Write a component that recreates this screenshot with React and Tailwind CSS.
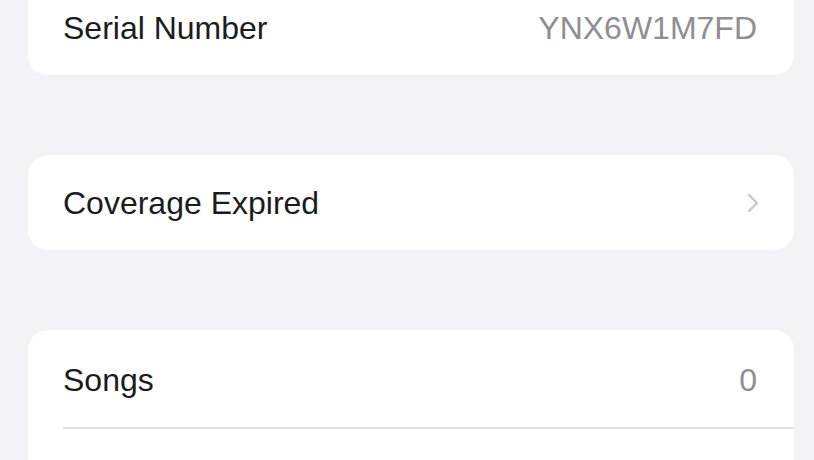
import { ChevronRight } from 'lucide-react';

function Row({ label, value, chevron, divider, h = 'h-[95px]' }) {
  return (
    <div className={`relative flex items-center justify-between ${h} pl-[35px] pr-[37px]`}>
      <span className="text-[32px] text-[#1c1c1e]">{label}</span>
      {value && <span className="text-[32px] text-[#8e8e93]">{value}</span>}
      {chevron && <ChevronRight size={32} strokeWidth={1.8} color="#c7c7cc" className="-mr-[12px]" />}
      {divider && <div className="absolute left-[35px] right-0 bottom-0 h-[2px] bg-[#e3e3e6]" />}
    </div>
  );
}

export default function App() {
  return (
    <div className="w-[814px] h-[460px] overflow-hidden bg-[#f2f2f7] font-['Liberation_Sans',sans-serif]">
      <div className="flex flex-col gap-[80px] pl-[28px] pr-[20px] mt-[-20px]">
        <div className="bg-white rounded-[20px]">
          <Row label="Serial Number" value="YNX6W1M7FD" />
        </div>
        <div className="bg-white rounded-[20px]">
          <Row label="Coverage Expired" chevron />
        </div>
        <div className="bg-white rounded-[20px]">
          <Row label="Songs" value="0" divider h="h-[99px]" />
          <div className="h-[95px]" />
        </div>
      </div>
    </div>
  );
}
